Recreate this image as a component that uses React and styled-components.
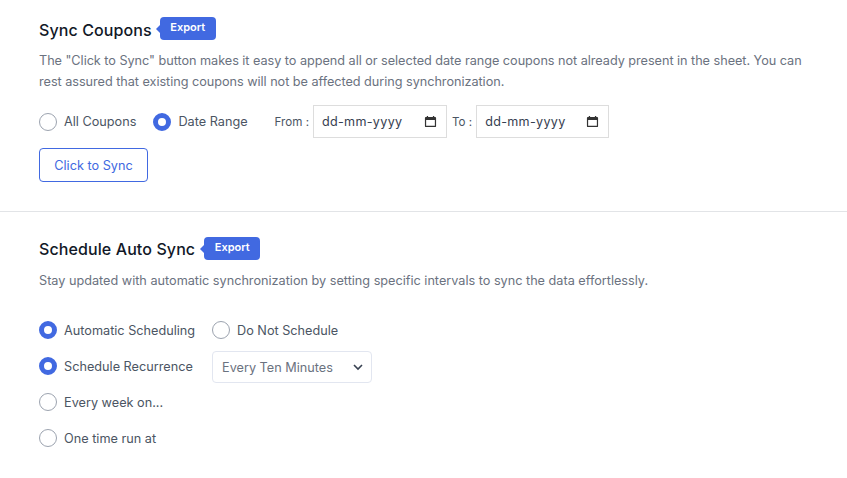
import React from 'react'
import styled, { createGlobalStyle } from 'styled-components'

const GlobalStyle = createGlobalStyle`
	html, body {
		margin: 0;
		background: #fff;
		font-family: Inter, "Liberation Sans", sans-serif;
	}
`

const Page = styled.div`
	width: 847px;
	height: 478px;
	overflow: hidden;
`

const Section = styled.section`
	padding: ${(props) => props.$padding};
	border-bottom: ${(props) => (props.$divider ? '1px solid #e2e4e7' : 'none')};
`

const TitleRow = styled.div`
	display: flex;
	align-items: flex-start;
	height: 33px;
`

const Title = styled.h2`
	margin: 0;
	padding-top: ${(props) => props.$top}px;
	font-size: 16px;
	line-height: 22px;
	font-weight: 500;
	letter-spacing: 0.1px;
	color: #111827;
`

const Badge = styled.span`
	position: relative;
	margin-left: ${(props) => props.$gap}px;
	width: 56px;
	height: 23px;
	border-radius: 4px;
	background: #4169e1;
	color: #fff;
	font-size: 11px;
	font-weight: 600;
	line-height: 21px;
	text-align: center;

	&::before {
		content: '';
		position: absolute;
		left: -4px;
		top: 8px;
		border-top: 4px solid transparent;
		border-bottom: 4px solid transparent;
		border-right: 4px solid #4169e1;
	}
`

const Description = styled.p`
	margin: 0;
	width: 770px;
	font-size: 12.7px;
	line-height: 21px;
	letter-spacing: ${(props) => props.$tracking || 0}px;
	color: #6b7280;
`

const Row = styled.div`
	display: flex;
	align-items: center;
	height: ${(props) => props.$height || 36}px;
`

const RadioLabel = styled.label`
	display: flex;
	align-items: center;
	gap: 7px;
	margin-right: ${(props) => props.$gap || 0}px;
	width: ${(props) => (props.$width ? `${props.$width}px` : 'auto')};
	font-size: 12.7px;
	color: #4b5563;
`

const RadioDot = styled.span`
	box-sizing: border-box;
	flex: none;
	width: 18px;
	height: 18px;
	border-radius: 50%;
	border: ${(props) => (props.$checked ? '5px solid #4169e1' : '1px solid #9ca3af')};
	background: #fff;
`

const FieldLabel = styled.span`
	margin: 0 ${(props) => props.$right}px 0 ${(props) => props.$left}px;
	font-size: 11.6px;
	color: #4b5563;
`

const DateField = styled.div`
	box-sizing: border-box;
	display: flex;
	align-items: center;
	justify-content: space-between;
	width: ${(props) => props.$width}px;
	height: 33px;
	padding: 0 9px 0 8px;
	border: 1px solid #ddd;
	font-size: 12.6px;
	letter-spacing: 0.3px;
	color: #374151;
`

const SyncButton = styled.button`
	display: block;
	box-sizing: border-box;
	width: 109px;
	height: 34px;
	margin-top: 10px;
	padding: 0;
	border: 1px solid #4169e1;
	border-radius: 4px;
	background: #fff;
	color: #4169e1;
	font-family: inherit;
	font-size: 12.7px;
`

const Select = styled.div`
	box-sizing: border-box;
	display: flex;
	align-items: center;
	justify-content: space-between;
	width: 160px;
	height: 32px;
	margin-top: 2px;
	padding: 0 7px 0 9px;
	border: 1px solid #e2e6f0;
	border-radius: 4px;
	font-size: 12.7px;
	color: #6b7280;
`

const Spacer = styled.div`
	height: ${(props) => props.$height}px;
`

const CalendarIcon = () => (
	<svg width="13" height="13" viewBox="0 0 14 14" aria-hidden="true">
		<path
			fill="#333"
			d="M3 1h1.4v1.2h5.2V1H11v1.2h1c.6 0 1 .4 1 1V12c0 .6-.4 1-1 1H2c-.6 0-1-.4-1-1V3.200c0-.6.4-1 1-1h1V1zM2.300 5.500v6.200h9.400V5.500H2.300z"
		/>
	</svg>
)

const ChevronIcon = () => (
	<svg width="12" height="12" viewBox="0 0 12 12" aria-hidden="true">
		<path d="M2 4l4 4 4-4" fill="none" stroke="#374151" strokeWidth="1.6" />
	</svg>
)

const Radio = ({ label, checked, width, gap }) => (
	<RadioLabel $width={width} $gap={gap}>
		<RadioDot $checked={checked} />
		{label}
	</RadioLabel>
)

const App = () => {
	return (
		<Page>
			<GlobalStyle />
			<Section $padding="17px 39px 29px" $divider>
				<TitleRow>
					<Title $top={2}>Sync Coupons</Title>
					<Badge $gap={8}>Export</Badge>
				</TitleRow>
				<Description $tracking={-0.04}>
					The "Click to Sync" button makes it easy to append all or selected date range coupons not
					already present in the sheet. You can rest assured that existing coupons will not be
					affected during synchronization.
				</Description>
				<Spacer $height={13} />
				<Row $height={33}>
					<Radio label="All Coupons" gap={17} />
					<Radio label="Date Range" checked />
					<FieldLabel $left={27} $right={4}>From :</FieldLabel>
					<DateField $width={134}>
						dd-mm-yyyy
						<CalendarIcon />
					</DateField>
					<FieldLabel $left={5} $right={4}>To :</FieldLabel>
					<DateField $width={133}>
						dd-mm-yyyy
						<CalendarIcon />
					</DateField>
				</Row>
				<SyncButton>Click to Sync</SyncButton>
			</Section>
			<Section $padding="25px 39px 0">
				<TitleRow>
					<Title $top={1}>Schedule Auto Sync</Title>
					<Badge $gap={9}>Export</Badge>
				</TitleRow>
				<Description $tracking={-0.01}>
					Stay updated with automatic synchronization by setting specific intervals to sync the data
					effortlessly.
				</Description>
				<Spacer $height={21} />
				<Row>
					<Radio label="Automatic Scheduling" checked width={173} />
					<Radio label="Do Not Schedule" />
				</Row>
				<Row>
					<Radio label="Schedule Recurrence" checked width={173} />
					<Select>
						Every Ten Minutes
						<ChevronIcon />
					</Select>
				</Row>
				<Row>
					<Radio label="Every week on..." />
				</Row>
				<Row>
					<Radio label="One time run at" />
				</Row>
			</Section>
		</Page>
	)
}

export default App
